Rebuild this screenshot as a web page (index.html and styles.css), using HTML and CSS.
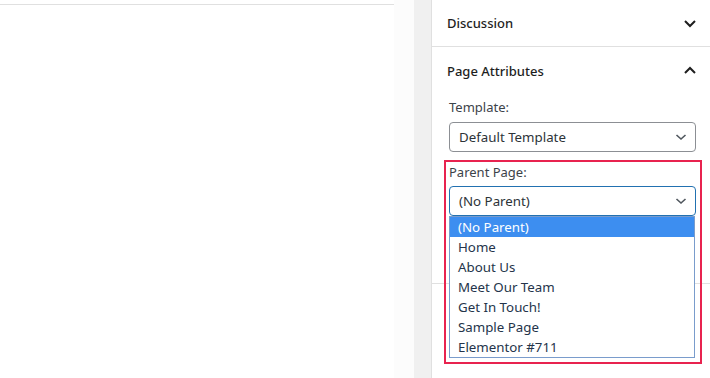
FILE: index.html
```html
<!DOCTYPE html>
<html lang="en">
<head>
  <meta charset="UTF-8" />
  <meta name="viewport" content="width=device-width, initial-scale=1.0">
  <title>Page Attributes</title>
  <link rel="stylesheet" href="styles.css">
</head>
<body>

  <!-- Editor canvas -->
  <div class="editor">
    <div class="canvas"></div>
    <div class="gutter"></div>
    <div class="scroll-track"></div>
  </div>

  <!-- Settings sidebar -->
  <aside class="sidebar">
    <section class="panel">
      <button class="panel-head">
        <span>Discussion</span>
        <svg width="24" height="24" viewBox="0 0 24 24"><path d="M7 10l5 5 5-5" fill="none" stroke="#1e1e1e" stroke-width="2"/></svg>
      </button>
    </section>

    <section class="panel open">
      <button class="panel-head">
        <span>Page Attributes</span>
        <svg width="24" height="24" viewBox="0 0 24 24"><path d="M7 14l5-5 5 5" fill="none" stroke="#1e1e1e" stroke-width="2"/></svg>
      </button>
      <div class="panel-body">
        <label class="field-label">Template:</label>
        <div class="select">
          <span>Default Template</span>
          <svg width="16" height="16" viewBox="0 0 16 16"><path d="M3.5 6l4.5 4 4.5-4" fill="none" stroke="#50575e" stroke-width="1.6"/></svg>
        </div>

        <!-- highlighted field, list is open -->
        <div class="parent-field">
          <label class="field-label">Parent Page:</label>
          <div class="select focus">
            <span>(No Parent)</span>
            <svg width="16" height="16" viewBox="0 0 16 16"><path d="M3.5 6l4.5 4 4.5-4" fill="none" stroke="#50575e" stroke-width="1.6"/></svg>
            <ul class="options">
              <li class="active">(No Parent)</li>
              <li>Home</li>
              <li>About Us</li>
              <li>Meet Our Team</li>
              <li>Get In Touch!</li>
              <li>Sample Page</li>
              <li>Elementor #711</li>
            </ul>
          </div>
        </div>
      </div>
    </section>

    <section class="panel last"></section>
  </aside>

</body>
</html>
```

FILE: styles.css
```css
body {
  margin: 0;
  font-family: "Noto Sans", sans-serif;
  font-size: 13px;
  color: #1e1e1e;
  background: #fff;
  display: flex;
  height: 378px;
  overflow: hidden;
}
.editor {
  display: flex;
  width: 431px;
  flex-shrink: 0;
}
.canvas {
  width: 394px;
  margin-top: 4px;
  border-top: 1px solid #e0e0e0;
}
.gutter {
  width: 20px;
  background: #fcfcfc;
}
.scroll-track {
  width: 17px;
  background: #f0f0f0;
}
.sidebar {
  flex: 1;
  border-left: 1px solid #e0e0e0;
}
.panel {
  border-bottom: 1px solid #e0e0e0;
}
.panel.last {
  border-bottom: none;
}
.panel-head {
  display: flex;
  align-items: center;
  justify-content: space-between;
  width: 100%;
  height: 46px;
  padding: 0 8px 0 15px;
  border: none;
  background: none;
  font-family: inherit;
  font-size: 13px;
  font-weight: 500;
  color: #1e1e1e;
}
.panel.open .panel-head {
  height: 48px;
}
.panel-body {
  padding: 3px 14px 67px 17px;
}
.field-label {
  display: block;
  color: #3c434a;
  line-height: 18px;
  margin-bottom: 6px;
}
.select {
  position: relative;
  display: flex;
  align-items: center;
  justify-content: space-between;
  height: 30px;
  box-sizing: border-box;
  padding: 0 6px 0 9px;
  border: 1px solid #8c8f94;
  border-radius: 4px;
  font-size: 13.3px;
  color: #2c3338;
  margin-bottom: 11px;
}
.parent-field {
  position: relative;
}
.parent-field::before {
  content: "";
  position: absolute;
  top: -3px;
  left: -5px;
  right: -6px;
  bottom: -148px;
  border: 2px solid #e8234f;
  z-index: 3;
  pointer-events: none;
}
.parent-field .field-label {
  margin-bottom: 5px;
}
.select.focus {
  border-color: #2271b1;
  margin-bottom: 0;
}
.options {
  position: absolute;
  top: 29px;
  left: -1px;
  right: 0;
  z-index: 2;
  margin: 0;
  padding: 0;
  list-style: none;
  background: #fff;
  border: 1px solid #7a9ccc;
  font-size: 13.3px;
  color: #24344a;
}
.options li {
  height: 20px;
  line-height: 20px;
  padding-left: 8px;
}
.options li.active {
  background: #3d8ef0;
  color: #fff;
}
```
